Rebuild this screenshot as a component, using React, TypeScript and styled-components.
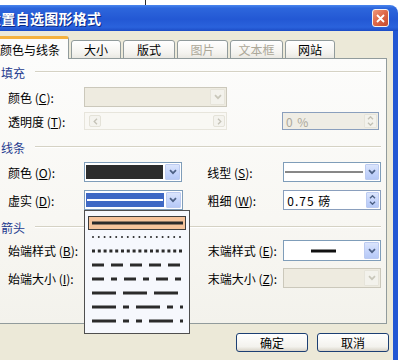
import React from 'react'
import styled, { createGlobalStyle } from 'styled-components'

const GlobalStyle = createGlobalStyle`
  html, body {
    margin: 0;
    padding: 0;
    background: #ffffff;
  }
  body {
    font-family: "Noto Sans CJK SC", "Liberation Sans", sans-serif;
    font-size: 12px;
    color: #000;
  }
  u {
    text-underline-offset: 1px;
  }
`

const Page = styled.div`
  width: 402px;
  height: 360px;
  overflow: hidden;
  display: flex;
  flex-direction: column;
`

const TopStrip = styled.div`
  flex: none;
  height: 5px;
  display: flex;
`

const Mark = styled.div`
  margin-left: 145px;
  width: 1px;
  background: #2a2a2a;
`

const Window = styled.div`
  flex: none;
  width: 418px;
  margin-left: -20px;
  display: flex;
  flex-direction: column;
`

const TitleBar = styled.div`
  height: 26px;
  display: flex;
  align-items: center;
  justify-content: space-between;
  padding: 0 9px 0 7px;
  border-radius: 8px 8px 0 0;
  background: linear-gradient(
    #4a86ee 0%,
    #2d66dc 12%,
    #2358d4 55%,
    #2a62dc 85%,
    #1c4cc6 100%
  );
`

const TitleText = styled.div`
  color: #fff;
  font-size: 14px;
  font-weight: bold;
  letter-spacing: 0.3px;
  text-shadow: 1px 1px 0 #0c2a86;
`

const CloseButton = styled.div`
  width: 17px;
  height: 18px;
  box-sizing: border-box;
  border: 1px solid #f3f3f3;
  border-radius: 3px;
  background: linear-gradient(135deg, #ef9a7c 0%, #df6a4b 45%, #c54a2e 100%);
  display: flex;
  align-items: center;
  justify-content: center;
`

const Body = styled.div`
  background: #ece9d8;
  border-left: 5px solid #2357d3;
  border-right: 5px solid #2357d3;
  border-bottom: 3px solid #2a55cf;
  padding-top: 5px;
  height: 326px;
  display: flex;
  flex-direction: column;
`

const TabRow = styled.div`
  height: 22px;
  display: flex;
  align-items: flex-end;
  gap: 2px;
  padding-left: 6px;
`

const Tab = styled.div<{ $w: number; $active?: boolean; $disabled?: boolean }>`
  position: relative;
  width: ${(p) => p.$w}px;
  height: ${(p) => (p.$active ? 23 : 19)}px;
  margin-bottom: -1px;
  box-sizing: border-box;
  display: flex;
  align-items: center;
  justify-content: center;
  padding-top: ${(p) => (p.$active ? 1 : 0)}px;
  border: 1px solid #919b9c;
  border-bottom: ${(p) => (p.$active ? 'none' : '1px solid #919b9c')};
  border-top: ${(p) => (p.$active ? '3px solid #f5b23d' : '1px solid #919b9c')};
  border-radius: 3px 3px 0 0;
  background: ${(p) =>
    p.$active ? '#fcfcfb' : 'linear-gradient(#ffffff, #f4f3ef 70%, #e9e8e2)'};
  color: ${(p) => (p.$disabled ? '#aca899' : '#000')};
  z-index: ${(p) => (p.$active ? 2 : 1)};
`

const Panel = styled.div`
  margin: 0 6px;
  height: 266px;
  box-sizing: border-box;
  border: 1px solid #919b9c;
  background: linear-gradient(#fcfcfb, #f8f7f3 60%, #f3f2ec);
  padding: 5px 5px 0 9px;
  display: flex;
  flex-direction: column;
`

const SectionHead = styled.div<{ $top: number }>`
  height: 16px;
  margin-top: ${(p) => p.$top}px;
  display: flex;
  align-items: center;
  color: #1f3b8f;
`

const HeadLine = styled.div`
  flex: 1;
  margin-left: 10px;
  border-top: 1px solid #d5d2c4;
  border-bottom: 1px solid #ffffff;
`

const Row = styled.div<{ $top: number; $h: number }>`
  height: ${(p) => p.$h}px;
  margin-top: ${(p) => p.$top}px;
  padding-left: 7px;
  display: flex;
  align-items: center;
`

const Label = styled.div<{ $gap?: number }>`
  width: 76px;
  margin-left: ${(p) => p.$gap ?? 0}px;
  white-space: nowrap;
`

const Combo = styled.div<{ $w: number; $disabled?: boolean }>`
  position: relative;
  width: ${(p) => p.$w}px;
  height: 100%;
  box-sizing: border-box;
  border: 1px solid ${(p) => (p.$disabled ? '#cbc8bb' : '#7f9db9')};
  background: ${(p) => (p.$disabled ? '#eeebe0' : '#ffffff')};
  padding: 1px;
  display: flex;
  gap: 2px;
`

const ComboValue = styled.div<{ $fill?: string }>`
  flex: 1;
  margin: 1px 0 1px 0;
  background: ${(p) => p.$fill ?? 'transparent'};
  display: flex;
  align-items: center;
  justify-content: center;
`

const DropButton = styled.div<{ $disabled?: boolean }>`
  width: 15px;
  box-sizing: border-box;
  border: 1px solid ${(p) => (p.$disabled ? '#e6e4da' : '#bccbf1')};
  border-radius: 1px;
  background: ${(p) =>
    p.$disabled ? '#f3f2ec' : 'linear-gradient(#dbe5fc, #c3d3fb 60%, #b6c9f6)'};
  display: flex;
  align-items: center;
  justify-content: center;
`

const SpinBox = styled.div<{ $w: number; $disabled?: boolean; $gap?: number }>`
  width: ${(p) => p.$w}px;
  height: 100%;
  margin-left: ${(p) => p.$gap ?? 0}px;
  box-sizing: border-box;
  border: 1px solid #8a9fbd;
  background: ${(p) => (p.$disabled ? '#efede5' : '#ffffff')};
  color: ${(p) => (p.$disabled ? '#aca899' : '#000')};
  padding: 1px;
  display: flex;
`

const SpinText = styled.div`
  flex: 1;
  padding-left: 2px;
  display: flex;
  align-items: center;
  letter-spacing: 1px;
`

const SpinButton = styled(DropButton)`
  width: 13px;
  flex-direction: column;
  gap: 2px;
`

const Slider = styled.div<{ $w: number }>`
  width: ${(p) => p.$w}px;
  height: 100%;
  box-sizing: border-box;
  border: 1px solid #e7e5dc;
  background: #f9f8f4;
  padding: 2px 1px 0 4px;
  display: flex;
  justify-content: space-between;
`

const SliderButton = styled.div`
  width: 12px;
  height: 12px;
  box-sizing: border-box;
  border: 1px solid #e4e2d8;
  border-radius: 2px;
  background: #f4f3ee;
  display: flex;
  align-items: center;
  justify-content: center;
`

const DropList = styled.div`
  position: absolute;
  top: 19px;
  left: -1px;
  width: 106px;
  height: 124px;
  box-sizing: border-box;
  border: 1px solid #4f4f4f;
  background: #f6f8fd;
  padding: 5px 3px;
  z-index: 5;
`

const ListItem = styled.div<{ $selected?: boolean }>`
  height: 14px;
  box-sizing: border-box;
  padding-left: ${(p) => (p.$selected ? 3 : 4)}px;
  border: ${(p) => (p.$selected ? '1px solid #3d3d3d' : 'none')};
  background: ${(p) => (p.$selected ? '#f6c49c' : 'transparent')};
  display: flex;
  align-items: center;
`

const ButtonRow = styled.div`
  display: flex;
  justify-content: flex-end;
  gap: 9px;
  padding: 9px 4px 0 0;
`

const PushButton = styled.div`
  width: 72px;
  height: 19px;
  box-sizing: border-box;
  border: 1px solid #1c3f73;
  border-radius: 3px;
  background: linear-gradient(#ffffff, #f3f2ed 75%, #d8d3c8);
  display: flex;
  align-items: center;
  justify-content: center;
`

const Chevron = ({ color = '#4d6185' }: { color?: string }) => (
  <svg width={8} height={6} viewBox="0 0 8 6">
    <path d="M1 1.2 L4 4.2 L7 1.2" fill="none" stroke={color} strokeWidth={1.7} />
  </svg>
)

const SpinArrow = ({ up, color = '#4d6185' }: { up?: boolean; color?: string }) => (
  <svg width={7} height={4} viewBox="0 0 7 4">
    <path
      d={up ? 'M1 3.3 L3.5 0.8 L6 3.3' : 'M1 0.7 L3.5 3.2 L6 0.7'}
      fill="none"
      stroke={color}
      strokeWidth={1.4}
    />
  </svg>
)

const SideArrow = ({ left }: { left?: boolean }) => (
  <svg width={5} height={7} viewBox="0 0 5 7">
    <path
      d={left ? 'M4 0.8 L1.2 3.5 L4 6.2' : 'M1 0.8 L3.8 3.5 L1 6.2'}
      fill="none"
      stroke="#c4c2b6"
      strokeWidth={1.3}
    />
  </svg>
)

const LineSample = ({
  dash,
  width = 91,
  thick = 3,
  color = '#2b2b2b',
  cap = 'butt',
}: {
  dash?: string
  width?: number
  thick?: number
  color?: string
  cap?: 'butt' | 'round'
}) => (
  <svg width={width} height={4} viewBox={`0 0 ${width} 4`}>
    <line
      x1={cap === 'round' ? 1 : 0}
      y1={2}
      x2={width}
      y2={2}
      stroke={color}
      strokeWidth={thick}
      strokeDasharray={dash}
      strokeLinecap={cap}
    />
  </svg>
)

const dashStyles: { dash?: string; thick: number; cap?: 'butt' | 'round' }[] = [
  { thick: 3 },
  { dash: '0 5.8', thick: 2, cap: 'round' },
  { dash: '3 2.8', thick: 3 },
  { dash: '12 7', thick: 3 },
  { dash: '12 7 6 7', thick: 3 },
  { dash: '24 7', thick: 3 },
  { dash: '24 7 6 7', thick: 3 },
  { dash: '24 7 6 7 6 7', thick: 3 },
]

const tabs = [
  { name: '颜色与线条', w: 78, active: true },
  { name: '大小', w: 50 },
  { name: '版式', w: 52 },
  { name: '图片', w: 51, disabled: true },
  { name: '文本框', w: 53, disabled: true },
  { name: '网站', w: 50 },
]

export default function App() {
  return (
    <Page>
      <GlobalStyle />
      <TopStrip>
        <Mark />
      </TopStrip>
      <Window>
        <TitleBar>
          <TitleText>设置自选图形格式</TitleText>
          <CloseButton>
            <svg width={9} height={9} viewBox="0 0 9 9">
              <path d="M1 1 L8 8 M8 1 L1 8" stroke="#fff" strokeWidth={1.8} />
            </svg>
          </CloseButton>
        </TitleBar>
        <Body>
          <TabRow>
            {tabs.map((t) => (
              <Tab key={t.name} $w={t.w} $active={t.active} $disabled={t.disabled}>
                {t.name}
              </Tab>
            ))}
          </TabRow>
          <Panel>
            <SectionHead $top={0}>
              填充
              <HeadLine />
            </SectionHead>
            <Row $top={7} $h={20}>
              <Label>
                颜色 (<u>C</u>):
              </Label>
              <Combo $w={143} $disabled>
                <ComboValue />
                <DropButton $disabled>
                  <Chevron color="#c9c7ba" />
                </DropButton>
              </Combo>
            </Row>
            <Row $top={5} $h={18}>
              <Label>
                透明度 (<u>T</u>):
              </Label>
              <Slider $w={143}>
                <SliderButton>
                  <SideArrow left />
                </SliderButton>
                <SliderButton>
                  <SideArrow />
                </SliderButton>
              </Slider>
              <SpinBox $w={97} $gap={55} $disabled>
                <SpinText>0 %</SpinText>
                <SpinButton $disabled>
                  <SpinArrow up color="#c4c2b6" />
                  <SpinArrow color="#c4c2b6" />
                </SpinButton>
              </SpinBox>
            </Row>

            <SectionHead $top={9}>
              线条
              <HeadLine />
            </SectionHead>
            <Row $top={7} $h={20}>
              <Label>
                颜色 (<u>O</u>):
              </Label>
              <Combo $w={99}>
                <ComboValue $fill="#2c2c2c" />
                <DropButton>
                  <Chevron />
                </DropButton>
              </Combo>
              <Label $gap={25}>
                线型 (<u>S</u>):
              </Label>
              <Combo $w={98}>
                <ComboValue>
                  <LineSample width={78} thick={1} color="#111" />
                </ComboValue>
                <DropButton>
                  <Chevron />
                </DropButton>
              </Combo>
            </Row>
            <Row $top={8} $h={20}>
              <Label>
                虚实 (<u>D</u>):
              </Label>
              <Combo $w={99}>
                <ComboValue $fill="#3f68c4">
                  <LineSample width={76} thick={2} color="#ffffff" />
                </ComboValue>
                <DropButton>
                  <Chevron />
                </DropButton>
                <DropList>
                  {dashStyles.map((d, i) => (
                    <ListItem key={i} $selected={i === 0}>
                      <LineSample dash={d.dash} thick={d.thick} cap={d.cap} />
                    </ListItem>
                  ))}
                </DropList>
              </Combo>
              <Label $gap={25}>
                粗细 (<u>W</u>):
              </Label>
              <SpinBox $w={98}>
                <SpinText>0.75 磅</SpinText>
                <SpinButton>
                  <SpinArrow up />
                  <SpinArrow />
                </SpinButton>
              </SpinBox>
            </Row>

            <SectionHead $top={9}>
              箭头
              <HeadLine />
            </SectionHead>
            <Row $top={5} $h={21}>
              <Label>
                始端样式 (<u>B</u>):
              </Label>
              <Label $gap={99 + 25}>
                末端样式 (<u>E</u>):
              </Label>
              <Combo $w={98}>
                <ComboValue>
                  <LineSample width={25} thick={3} color="#111" />
                </ComboValue>
                <DropButton>
                  <Chevron />
                </DropButton>
              </Combo>
            </Row>
            <Row $top={7} $h={20}>
              <Label>
                始端大小 (<u>I</u>):
              </Label>
              <Label $gap={99 + 25}>
                末端大小 (<u>Z</u>):
              </Label>
              <Combo $w={98} $disabled>
                <ComboValue />
                <DropButton $disabled>
                  <Chevron color="#c9c7ba" />
                </DropButton>
              </Combo>
            </Row>
          </Panel>
          <ButtonRow>
            <PushButton>确定</PushButton>
            <PushButton>取消</PushButton>
          </ButtonRow>
        </Body>
      </Window>
    </Page>
  )
}
